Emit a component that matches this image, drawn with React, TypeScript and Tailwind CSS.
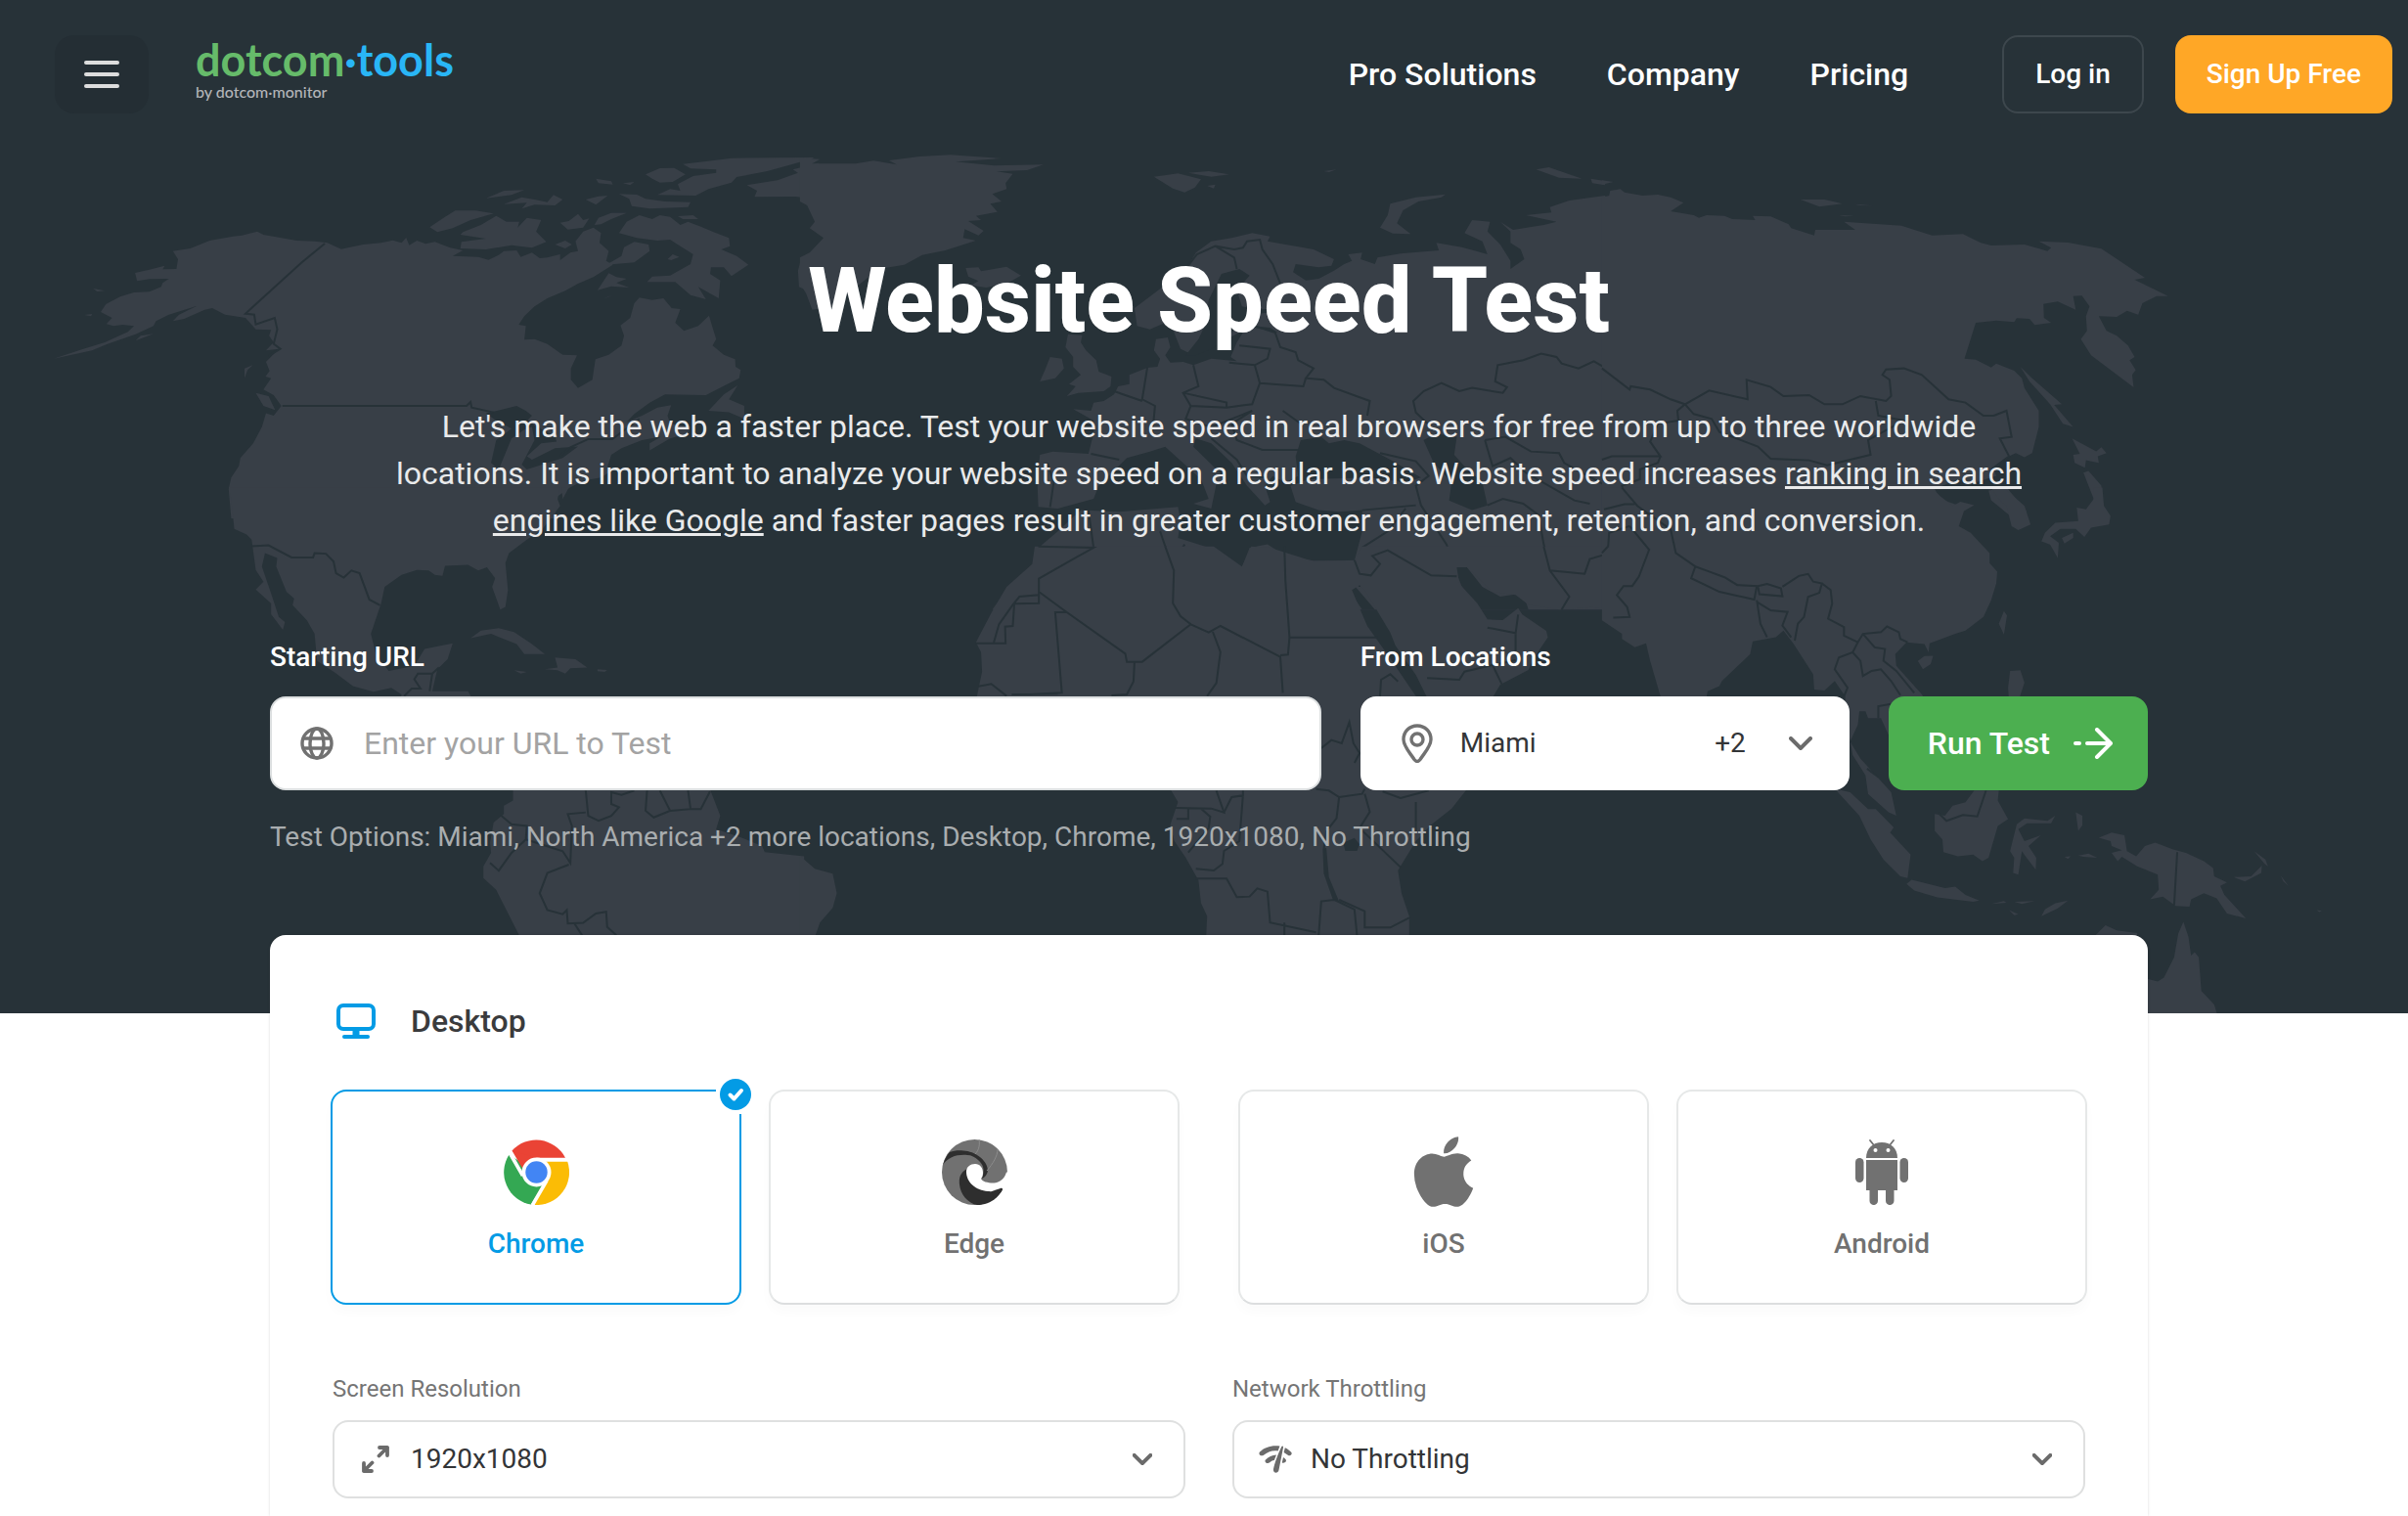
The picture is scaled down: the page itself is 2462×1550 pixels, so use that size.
import React, { useState } from "react";
import { FaApple } from "react-icons/fa";

type Tile = { transform: string; land: string[]; water?: string[]; borders: string[] };

/* The map is stored in sheets, each in its own coordinate grid. */
const tiles: Tile[] = [
  {
    transform: "scale(0.523 0.3333)",
    land: [
      "M105,1100 L160,1072 L205,1050 L250,1018 L262,1000 L240,996 L222,1000 L208,994 L219,975 L197,957 L207,933 L235,910 L262,897 L292,895 L315,880 L318,868 L330,855 L292,856 L268,862 L264,837 L290,828 L322,815 L318,826 L345,825 L348,795 L338,770 L372,762 L410,738 L455,725 L473,722 L503,710 L515,720 L545,728 L580,738 L615,740 L640,745 L667,764 L710,750 L745,745 L768,737 L785,745 L794,729 L800,752 L815,738 L832,748 L850,742 L880,760 L905,768 L885,785 L935,788 L955,797 L975,782 L985,770 L1010,768 L1018,788 L1040,775 L1055,792 L1070,790 L1095,780 L1095,798 L1115,775 L1130,770 L1125,740 L1140,710 L1160,698 L1175,715 L1172,745 L1190,770 L1185,800 L1198,812 L1160,850 L1130,870 L1105,892 L1070,915 L1045,940 L1025,970 L1014,996 L1028,1000 L1025,1042 L1045,1040 L1070,1055 L1100,1088 L1128,1090 L1116,1130 L1116,1165 L1130,1190 L1158,1165 L1164,1102 L1190,1088 L1215,1060 L1220,1030 L1213,998 L1232,975 L1240,930 L1250,913 L1275,920 L1297,915 L1313,945 L1330,948 L1320,990 L1337,1015 L1365,1000 L1386,968 L1400,1040 L1393,1060 L1415,1088 L1437,1102 L1438,1125 L1448,1135 L1445,1160 L1420,1180 L1380,1212 L1300,1210 L1270,1235 L1240,1270 L1225,1295 L1255,1275 L1285,1250 L1312,1243 L1305,1275 L1310,1300 L1350,1310 L1345,1330 L1310,1345 L1270,1382 L1270,1360 L1292,1340 L1255,1350 L1215,1375 L1195,1395 L1188,1430 L1190,1450 L1175,1465 L1140,1475 L1115,1495 L1088,1525 L1085,1590 L452,1590 L447,1500 L452,1465 L467,1430 L470,1405 L495,1360 L512,1310 L520,1268 L535,1275 L550,1245 L535,1212 L515,1195 L530,1160 L519,1155 L527,1138 L520,1110 L545,1070 L520,1075 L535,1050 L526,1030 L530,1012 L500,1010 L480,975 L440,965 L415,945 L400,950 L360,978 L338,985 L350,965 L385,938 L330,965 L305,985 L300,1000 L265,1025 L210,1055 L180,1075 Z",
      "M840,697 L870,665 L890,646 L930,646 L965,655 L920,675 L885,700 L855,712 Z",
      "M905,712 L940,690 L970,662 L990,680 L1015,680 L1012,698 L1030,668 L1058,675 L1048,710 L1068,742 L1040,760 L1000,752 L950,765 L900,762 L902,742 L950,732 L900,720 Z",
      "M1095,683 L1112,678 L1130,656 L1140,675 L1152,670 L1140,698 L1110,704 Z",
      "M1085,750 L1105,738 L1118,750 L1105,762 Z",
      "M1162,690 L1170,668 L1195,653 L1225,653 L1195,672 L1175,688 Z",
      "M1210,715 L1225,680 L1250,660 L1275,672 L1290,660 L1310,665 L1330,690 L1345,680 L1370,695 L1395,712 L1425,730 L1427,755 L1410,765 L1440,785 L1463,812 L1430,847 L1415,820 L1390,820 L1388,840 L1408,860 L1405,915 L1365,880 L1380,918 L1350,905 L1320,865 L1265,865 L1275,848 L1310,845 L1350,810 L1355,780 L1330,755 L1310,735 L1285,738 L1245,730 Z",
      "M1185,812 L1215,785 L1220,758 L1240,742 L1268,750 L1270,770 L1240,805 Z",
      "M1168,890 L1190,838 L1205,850 L1225,855 L1205,868 L1230,882 L1195,878 Z",
      "M950,608 L985,585 L1025,583 L1000,598 Z",
      "M985,626 L1020,605 L1045,612 L1070,620 L1082,598 L1100,612 L1085,630 L1045,628 L1020,640 L1030,622 Z",
      "M1145,612 L1170,602 L1188,600 L1165,628 Z",
      "M1165,548 L1195,556 L1198,566 L1170,562 Z",
      "M1218,562 L1240,558 L1232,568 Z",
      "M1210,595 L1245,597 L1262,610 L1300,618 L1350,620 L1345,635 L1270,640 L1235,632 L1230,610 Z",
      "M1262,535 L1290,516 L1318,515 L1340,535 L1315,558 L1290,560 L1275,548 Z",
      "M1335,503 L1380,495 L1430,485 L1590,483 L1590,486 L1500,525 L1440,543 L1430,560 L1385,580 L1360,600 L1285,598 L1310,580 L1330,585 L1325,565 L1355,540 L1400,530 L1400,520 L1350,517 Z",
      "M1460,568 L1520,553 L1560,530 L1550,520 L1600,500 L1600,612 L1555,603 L1475,604 L1480,585 Z",
      "M1590,785 L1565,800 L1560,830 L1562,880 L1590,900 Z",
      "M1325,663 L1355,660 L1365,672 L1335,672 Z",
      "M1305,795 L1315,780 L1328,788 L1312,798 Z",
      "M1385,1260 L1415,1210 L1442,1182 L1425,1225 L1455,1245 L1455,1285 L1425,1265 Z",
      "M478,1160 L478,1130 L494,1120 L484,1135 Z",
      "M500,1205 L525,1215 L538,1258 L515,1245 Z",
      "M265,1045 L275,1030 L300,1024 Z",
      "M182,885 L205,892 L190,894 Z",
      "M165,966 L180,963 L178,970 Z",
      "M1180,915 L1198,905 L1188,912 Z",
    ],
    water: [
      "M950,1268 L1010,1245 L1028,1260 L1040,1275 L1032,1288 L1045,1305 L1085,1338 L1088,1355 L1058,1360 L1030,1400 L1040,1410 L1085,1375 L1130,1370 L1100,1405 L1030,1440 L1020,1425 L1045,1350 L1040,1310 L1025,1318 L1000,1345 L975,1440 L960,1420 L970,1350 L1000,1315 L970,1290 Z",
    ],
    borders: [
      "M635,747 L590,805 L480,962 L497,965 L500,995 L537,975 L542,1010 L535,1055 L548,1070 L525,1092",
      "M552,1245 L912,1245 L920,1233 L922,1250 L965,1265",
      "M1095,1398 L1115,1372 L1150,1347 L1197,1347 L1250,1285",
    ],
  },
  {
    transform: "translate(820 100) scale(0.523 0.3333)",
    land: [
      "M-4,185 L35,188 L20,202 L105,202 L140,193 L185,205 L170,192 L230,180 L290,175 L390,186 L300,196 L375,208 L472,205 L440,222 L380,226 L412,233 L398,262 L400,280 L372,295 L390,318 L368,325 L382,350 L340,362 L350,375 L325,378 L355,408 L345,422 L318,403 L315,430 L340,438 L280,468 L235,482 L200,512 L150,525 L90,600 L60,640 L20,650 L8,600 L-4,570 L-4,490 L15,475 L42,430 L15,400 L25,380 L10,330 L-4,318 Z",
      "M320,522 L345,520 L350,532 L400,518 L428,545 L400,570 L360,582 L330,575 L345,562 L325,548 Z",
      "M688,242 L735,232 L780,250 L768,275 L748,290 L725,278 Z",
      "M755,230 L795,225 L835,235 L800,242 Z",
      "M792,270 L808,266 L805,278 Z",
      "M1020,225 L1045,220 L1030,228 Z",
      "M1130,398 L1145,360 L1150,325 L1200,305 L1258,296 L1250,305 L1205,318 L1175,345 L1163,385 L1190,418 L1155,416 Z",
      "M1435,220 L1460,213 L1525,248 L1480,245 Z",
      "M1542,248 L1570,255 L1570,268 L1545,262 Z",
      "M520,725 L548,728 L545,750 L555,775 L575,805 L580,840 L605,855 L603,885 L590,900 L540,905 L518,915 L535,885 L522,878 L545,850 L530,825 L530,795 L515,765 Z",
      "M465,870 L475,835 L485,795 L508,800 L512,830 L495,860 Z",
      "M530,955 L565,960 L570,935 L590,930 L610,910 L618,885 L640,878 L640,850 L675,828 L695,825 L700,800 L688,775 L692,740 L715,735 L720,765 L710,790 L720,812 L745,810 L765,820 L800,800 L850,808 L838,795 L850,750 L870,700 L930,720 L915,705 L880,700 L830,740 L800,760 L780,740 L760,785 L740,770 L725,710 L710,690 L680,710 L655,700 L650,645 L680,610 L705,580 L725,560 L740,530 L755,515 L770,475 L800,440 L840,430 L880,415 L915,425 L910,440 L1000,465 L1040,495 L1035,515 L1010,520 L965,510 L960,535 L985,560 L1010,555 L1040,530 L1060,510 L1075,500 L1068,480 L1095,475 L1092,495 L1120,510 L1125,490 L1170,478 L1245,468 L1240,445 L1290,458 L1340,480 L1330,440 L1295,415 L1310,375 L1345,380 L1340,410 L1365,450 L1385,500 L1385,525 L1412,495 L1405,465 L1385,445 L1385,410 L1365,380 L1390,405 L1450,390 L1475,380 L1415,360 L1465,352 L1462,335 L1500,315 L1570,300 L1572,310 L1572,1570 L372,1570 L395,1520 L450,1450 L455,1390 L500,1330 L545,1265 L620,1270 L735,1255 L740,1300 L735,1350 L805,1385 L860,1440 L875,1380 L910,1370 L945,1405 L1000,1420 L1080,1420 L1095,1330 L1095,1265 L1050,1270 L1010,1265 L965,1240 L955,1190 L990,1170 L1110,1165 L1180,1180 L1210,1165 L1150,1110 L1090,1060 L1060,1050 L1030,1060 L1015,1040 L975,1050 L965,1100 L970,1160 L945,1180 L920,1160 L905,1190 L915,1240 L905,1250 L870,1190 L840,1120 L800,1060 L770,1045 L765,1070 L830,1170 L810,1185 L800,1260 L765,1245 L795,1230 L780,1170 L710,1070 L680,1085 L635,1105 L580,1190 L570,1230 L500,1260 L462,1255 L460,1180 L465,1095 L490,1085 L560,1092 L570,1030 L570,990 Z",
    ],
    water: [
      "M820,540 L855,525 L875,545 L850,590 L860,640 L890,650 L960,640 L930,655 L880,665 L885,690 L850,700 L830,740 L800,770 L770,790 L750,790 L775,740 L790,690 L795,620 Z",
      "M1215,1050 L1240,1030 L1280,1040 L1275,1095 L1295,1130 L1330,1180 L1340,1250 L1310,1265 L1265,1235 L1270,1180 L1235,1120 Z",
      "M1048,1445 L1060,1460 L1120,1570 L1095,1570 L1065,1500 Z",
      "M1275,1440 L1300,1440 L1330,1500 L1365,1530 L1410,1520 L1420,1570 L1320,1570 L1290,1500 Z",
    ],
    borders: [
      "M755,515 L772,480 L808,455 L845,465 L862,460 L870,440 L895,435 L900,465 L920,510 L935,570",
      "M808,455 L845,490 L850,525",
      "M885,700 L925,720 L935,765 L965,780 L970,805 L1000,830 L985,860 L1020,865 L1040,890 L1110,930 L1105,975",
      "M855,760 L915,770 L910,800 L885,820 L835,812",
      "M765,820 L775,885 L745,905 L760,945 L830,950 L880,940 L895,875 L885,820",
      "M895,875 L980,885 L985,860",
      "M675,828 L665,925 L690,945 L685,1030 M610,900 L665,930",
      "M745,905 L830,935 L830,950 M760,945 L750,985 L800,1010 L880,960",
      "M880,960 L840,1000 L850,1050 L900,1080 L970,1080 M940,960 L975,1000",
      "M800,1045 L850,1110 L870,1160 L910,1165",
      "M480,1120 L492,1180 L485,1255 M565,1092 L620,1110",
      "M1130,1090 L1200,1115 L1225,1160 L1200,1190 L1210,1250 L1260,1370 L1275,1440",
      "M1095,1265 L1200,1250 M1095,1380 L1145,1330 L1180,1260",
      "M1572,830 L1548,808 L1518,830 L1485,815 L1475,795 L1445,785 L1410,805 L1360,820 L1355,870 L1378,888 L1370,905 L1310,890 L1285,900 L1250,875 L1215,900 L1195,930 L1200,965 L1230,1010",
      "M1335,1050 L1375,1040 L1425,1085 L1480,1090 L1490,1120 L1572,1190 M1335,1050 L1350,1130 L1385,1105 L1415,1150 L1510,1235 L1540,1245",
      "M1340,1250 L1370,1230 L1410,1245 L1440,1280 L1450,1370 L1465,1455 L1530,1455 L1540,1410 L1572,1400",
      "M560,1265 L570,1380 L530,1400 L520,1440 L465,1475 L463,1570 M465,1515 L505,1560",
      "M700,1330 L722,1430 L725,1570 M725,1430 L748,1370",
      "M943,1405 L948,1570 M1085,1420 L1090,1500",
      "M1090,1465 L1120,1450 L1115,1410 L1145,1385 L1190,1430 L1235,1467 L1275,1470",
    ],
  },
  {
    transform: "translate(1640 0) scale(0.5242 0.3333)",
    land: [
      "M-4,605 L10,600 L12,585 L32,580 L40,590 L75,600 L105,597 L130,605 L155,622 L130,648 L175,660 L185,668 L200,660 L235,662 L250,672 L295,675 L290,662 L325,664 L360,688 L365,700 L410,722 L412,705 L490,705 L468,680 L580,692 L640,722 L700,718 L735,745 L755,753 L820,750 L865,770 L872,760 L848,740 L905,744 L970,763 L1055,852 L1035,858 L1100,908 L1078,908 L1050,930 L1042,965 L1020,953 L1000,972 L965,970 L980,1015 L1000,1030 L1022,1060 L1035,1095 L1025,1105 L1037,1135 L1030,1150 L1033,1188 L950,1090 L930,1040 L942,1015 L940,970 L947,940 L932,907 L915,908 L920,950 L885,925 L857,932 L858,975 L872,990 L840,997 L830,978 L805,976 L800,988 L765,983 L725,990 L703,1100 L725,1103 L755,1127 L765,1115 L800,1137 L815,1160 L820,1190 L848,1260 L848,1310 L835,1390 L820,1403 L803,1390 L790,1400 L760,1440 L765,1460 L725,1480 L690,1470 L645,1500 L655,1530 L690,1550 L690,1580 L-4,1580 Z",
      "M-4,553 L18,558 L-4,566 Z",
      "M383,612 L430,612 L465,625 L420,634 Z",
      "M488,626 L525,631 L500,630 Z",
      "M458,660 L488,662 L470,664 Z",
      "M812,1125 L835,1160 L893,1240 L878,1242 L915,1310 L895,1300 L870,1240 L830,1170 Z",
      "M913,1345 L960,1385 L970,1372 L980,1390 L963,1400 L965,1420 L940,1412 L938,1435 L918,1420 L915,1395 L928,1392 Z",
      "M935,1450 L945,1445 L970,1490 L973,1580 L945,1580 L955,1530 Z",
      "M750,1505 L785,1495 L825,1570 L790,1580 L755,1535 Z",
    ],
    borders: [
      "M-4,1130 L50,1195 L52,1185 L90,1195 L130,1225 L158,1240 L205,1198 L280,1225 L278,1165 L325,1187 L350,1215 L400,1212 L430,1240 L465,1240 L500,1215 L550,1230 L560,1215 L557,1165 L543,1150 L550,1133 L585,1130 L620,1150 L672,1225 L705,1235 L740,1275 L760,1275 L785,1260 L795,1340 L772,1345 L790,1400 L755,1440",
      "M158,1240 L175,1270 L210,1285 L225,1325 L300,1370 L325,1407 L400,1412 L435,1427 L480,1410 L520,1395 L515,1350 L585,1290 L535,1275 L530,1230",
      "M158,1240 L143,1260 L145,1290 L105,1300 L90,1355 L110,1400 L15,1400 L-4,1410 M110,1400 L105,1420 L70,1440 L70,1470 L35,1490 L40,1545",
    ],
  },
  {
    transform: "translate(0 500) scale(0.523 0.3444)",
    land: [
      "M447,-4 L1095,-4 L1090,30 L1095,50 L1060,120 L1030,150 L995,190 L988,220 L993,300 L988,350 L978,358 L962,290 L968,265 L952,232 L935,242 L915,225 L870,228 L865,258 L850,255 L838,242 L815,240 L785,255 L752,290 L745,340 L725,430 L735,490 L760,540 L810,525 L830,475 L885,458 L875,505 L855,535 L845,600 L915,600 L930,640 L780,640 L785,610 L765,590 L730,602 L690,585 L655,545 L620,510 L615,430 L600,390 L572,345 L575,325 L560,305 L540,230 L542,205 L518,190 L512,230 L530,310 L545,380 L557,395 L553,418 L530,372 L530,340 L500,298 L515,275 L500,240 L492,150 L482,135 L458,118 L452,30 Z",
      "M1098,-4 L1112,-4 L1100,30 Z",
      "M920,443 L940,420 L975,413 L1005,425 L1040,460 L1065,490 L1025,490 L1010,460 L960,430 Z",
      "M1065,535 L1090,530 L1085,500 L1125,505 L1148,530 L1115,532 L1105,548 L1090,538 Z",
      "M1005,538 L1030,543 L1018,548 Z",
      "M1168,535 L1187,537 L1182,543 L1168,541 Z",
      "M1003,880 L1385,880 L1408,970 L1400,1010 L1450,1035 L1490,1060 L1495,1078 L1572,1090 L1572,1340 L1020,1340 L990,1250 L970,1190 L945,1155 L945,1120 L960,1080 L958,1050 L965,990 L985,965 L985,940 L1003,925 Z",
    ],
    borders: [
      "M492,170 L525,167 L570,203 L612,203 L615,190 L637,192 L652,215 L657,250 L672,263 L687,242 L703,250 L722,328 L743,345",
      "M790,615 L805,592 L822,592 L810,565 L817,548 L845,548 L858,530 M845,548 L840,600",
      "M1145,895 L1150,970 L1170,985 L1195,970 L1210,945 L1195,935 L1195,900 L1215,908 L1240,895",
      "M1265,895 L1262,955 L1278,975 L1310,955 L1290,895 M1345,895 L1350,950 L1310,955 M1350,950 L1370,950 L1388,898",
      "M980,970 L1000,995 L1030,1000 L1028,1040 L1100,1075 L1115,1110 L1118,1000 L1110,965 L1145,960",
      "M958,1110 L975,1133 L1000,1080 L1028,1040",
      "M1112,1115 L1070,1140 L1055,1200 L1070,1250 L1100,1262 L1108,1250 L1110,1290 L1140,1288 L1165,1260 L1185,1255 L1187,1300 L1205,1325 M1123,1290 L1138,1325",
    ],
  },
  {
    transform: "translate(820 560) scale(0.523 0.3333)",
    land: [
      "M455,-4 L805,-4 L860,58 L878,-4 L915,0 L1000,42 L1080,38 L1095,-4 L1572,-4 L1572,190 L1545,182 L1480,190 L1420,175 L1395,145 L1350,135 L1300,60 L1280,60 L1285,110 L1320,170 L1340,220 L1370,222 L1400,185 L1408,205 L1455,255 L1458,275 L1430,340 L1420,375 L1365,420 L1350,460 L1222,460 L1200,390 L1160,300 L1150,260 L1100,130 L1090,115 L1075,130 L1105,240 L1150,340 L1200,455 L1215,470 L1300,740 L1270,800 L1230,850 L1200,900 L1165,990 L1172,1060 L1187,1130 L1187,1195 L790,1195 L792,1130 L780,1090 L775,1020 L750,950 L728,900 L720,850 L735,780 L720,740 L600,470 L340,470 L352,380 L350,320 L340,290 L370,200 L400,120 L450,50 Z",
      "M-4,945 L25,985 L60,1000 L68,1060 L60,1105 L35,1150 L25,1195 L-4,1195 Z",
    ],
    water: ["M1062,930 L1058,905 L1080,890 L1090,910 L1085,930 Z", "M1018,925 L1025,920 L1030,1010 L1050,1085 L1038,1080 L1020,1000 Z"],
    borders: [
      "M462,-4 L570,0 L530,35 L463,95 L463,170 L415,172 M463,135 L515,195 L632,325 L635,350 L665,350 L760,235 L740,210 L725,170 L727,70 L710,-4",
      "M415,172 L412,240 L397,242 L398,293 L340,293 M463,145 L425,150 L412,175 L385,235 L375,290",
      "M515,198 L495,198 L508,445 L445,450 M345,425 L370,418 L400,455 M410,450 L500,448",
      "M650,350 L648,410 L635,450 L605,453",
      "M760,235 L795,260 L818,240 L935,335 L940,445 M803,258 L818,320 L810,415 L792,455",
      "M943,-4 L945,100 L953,275 L1125,275 M953,275 L950,328 L935,330",
      "M1080,38 L1090,80 L1112,85 L1130,50 L1115,25 L1145,8 L1230,85 L1280,88",
      "M1130,455 L1132,405 L1150,388 L1165,410 M1222,400 L1285,405 L1295,380 L1350,360 L1368,418 M1350,360 L1395,345 M1340,245 L1395,262 L1400,205 M1395,262 L1395,330",
      "M1450,-4 L1462,70 L1500,150 L1485,190 M1462,70 L1530,80 L1540,35 L1572,20",
      "M1015,615 L1035,590 L1055,600 L1070,535 L1078,600 L1090,630 L1080,660 M1005,740 L1030,745 L1050,765 L1095,755 L1100,740",
      "M730,798 L800,800 L825,812 L810,745 M825,812 L840,765 L862,760 L862,745 M862,760 L855,900 L825,930 L822,970 L805,990 L770,985",
      "M755,800 L755,832 L732,832 M780,800 L798,825 L795,860 L755,935",
      "M770,1015 L830,1015 L850,1072 L875,1070 L890,1045 L910,1055 L915,1150 L1005,1180",
      "M1050,765 L1045,830 L1025,870 L1020,925 M1100,755 L1110,810 L1090,860 L1170,980 M1135,748 L1170,768 L1225,745 M1200,780 L1200,870",
      "M1040,1080 L1015,1085 L1010,1190 M1040,1080 L1080,1110 L1085,1190 M1050,1080 L1100,1115 L1100,1165 L1150,1165 L1187,1135 M943,1150 L943,1195",
    ],
  },
  {
    transform: "translate(1640 500) scale(0.5242 0.3444)",
    land: [
      "M-4,-4 L640,-4 L655,20 L680,50 L695,38 L722,48 L702,65 L692,110 L715,130 L752,190 L752,220 L767,245 L765,280 L755,330 L740,380 L705,420 L685,430 L635,458 L633,485 L625,460 L590,455 L568,490 L570,525 L620,610 L640,660 L650,700 L620,740 L600,760 L570,700 L555,730 L540,680 L515,680 L510,660 L498,660 L495,700 L480,750 L500,800 L530,850 L560,900 L570,970 L555,960 L515,905 L510,850 L485,790 L478,730 L470,615 L450,570 L430,598 L410,595 L408,550 L370,460 L350,420 L335,440 L290,452 L285,490 L230,570 L225,585 L202,600 L195,660 L170,700 L130,680 L110,615 L90,510 L82,458 L60,470 L35,445 L35,430 L-4,390 Z",
      "M755,-4 L780,-4 L820,50 L832,105 L808,122 L795,110 L785,50 L770,30 Z",
      "M955,-4 L972,-4 L975,50 L988,80 L985,105 L950,115 L937,142 L920,118 L890,118 L870,140 L887,160 L885,205 L870,165 L853,155 L860,130 L880,100 L925,95 L922,55 L940,60 L955,30 Z",
      "M893,145 L915,130 L915,145 L898,162 Z",
      "M770,400 L780,362 L786,375 L780,432 Z",
      "M612,510 L625,496 L642,495 L637,520 L622,535 Z",
      "M792,540 L812,538 L820,575 L808,630 L790,630 L788,590 Z",
      "M450,890 L480,900 L515,950 L530,950 L565,1005 L558,1020 L598,1085 L592,1155 L578,1150 L545,1100 L520,1040 L498,970 Z",
      "M590,1172 L600,1160 L640,1175 L665,1185 L685,1180 L705,1205 L732,1222 L720,1225 L650,1212 L605,1192 Z",
      "M645,965 L665,970 L680,940 L705,930 L722,895 L770,895 L768,925 L788,980 L768,1000 L750,1095 L738,1105 L720,1085 L690,1090 L662,1078 L660,1040 L645,1015 Z",
      "M880,970 L872,992 L825,992 L808,1010 L820,1045 L852,1028 L828,1060 L843,1095 L842,1130 L822,1090 L815,1075 L808,1145 L798,1140 L800,1095 L792,1075 L805,995 L820,978 L865,985 Z",
      "M920,960 L933,970 L933,998 L925,1015 Z",
      "M925,1088 L945,1082 L962,1095 L935,1092 Z",
      "M898,1092 L910,1090 L905,1098 Z",
      "M965,1035 L990,1020 L1015,1028 L1020,1075 L1038,1090 L1055,1060 L1075,1050 L1110,1070 L1135,1080 L1170,1105 L1188,1125 L1190,1150 L1215,1168 L1202,1178 L1210,1205 L1252,1275 L1215,1260 L1195,1215 L1170,1200 L1145,1218 L1142,1240 L1115,1238 L1090,1210 L1065,1218 L1082,1190 L1080,1145 L1040,1120 L1010,1092 L1002,1105 L990,1080 L1010,1072 L990,1060 L988,1045 Z",
      "M1228,1152 L1262,1150 L1283,1118 L1282,1140 L1250,1165 Z",
      "M1268,1075 L1290,1100 L1295,1120 L1288,1112 Z",
      "M1320,1148 L1335,1178 L1325,1165 Z",
      "M1390,1250 L1400,1252 L1395,1256 Z",
      "M755,1232 L780,1223 L785,1228 Z",
      "M800,1225 L840,1223 L815,1232 Z",
      "M790,1250 L808,1262 L800,1265 Z",
      "M853,1268 L860,1248 L880,1230 L905,1222 L885,1245 Z",
      "M978,1295 L1000,1310 L1040,1318 L1040,1330 L955,1330 Z",
      "M1050,1450 L1080,1462 L1092,1450 L1112,1390 L1120,1320 L1130,1285 L1140,1330 L1145,1385 L1152,1375 L1160,1390 L1165,1490 L1190,1530 L1198,1570 L1050,1570 Z",
    ],
    borders: [
      "M50,110 L88,180 L68,260 L55,288 L38,288 L25,315 L45,350 L50,380 L18,382 M35,-4 L65,50 L130,120 L140,190 L178,230 L170,265 L225,305 L293,328 L298,288 L260,285 L235,262 L205,245 L178,230",
      "M0,60 L40,45 L60,45 M-4,190 L8,170 L10,130 L50,110",
      "M300,288 L303,312 L348,318 L345,295 L318,282 Z M348,290 L380,258 L398,252 L408,275 L425,280 L420,308 L398,320 L390,380 L378,400 L372,450",
      "M298,330 L305,400 L318,440 M298,335 L325,360 L358,365 L348,405 L365,440",
      "M425,280 L442,300 L445,340 L437,385 L468,410 L468,435 L495,455 L485,485 L458,500 L450,535 L475,590 L468,615",
      "M495,455 L505,430 L540,425 L552,408 L575,425 L578,445 L592,455 M505,430 L528,470 L548,475 L545,510 L570,540 L605,605",
      "M485,485 L500,510 L505,555 L522,540 L540,535 L560,570 L578,612 M535,680 L535,645 L560,638",
      "M513,830 L535,855 M652,962 L668,985 L700,968 L728,972 L745,895 M1118,1078 L1112,1235",
    ],
  },
];

function WorldMap() {
  return (
    <svg
      className="pointer-events-none absolute inset-0 h-full w-full"
      viewBox="0 0 2462 1036"
      preserveAspectRatio="xMidYMin slice"
      aria-hidden="true"
    >
      {tiles.map((t) => (
        <g key={t.transform} transform={t.transform}>
          <path d={t.land.join(" ")} fill="#383f47" />
          {t.water && <path d={t.water.join(" ")} fill="#273238" />}
          <path d={t.borders.join(" ")} fill="none" stroke="#273238" strokeWidth="2" vectorEffect="non-scaling-stroke" />
        </g>
      ))}
    </svg>
  );
}

function GlobeIcon() {
  return (
    <svg className="h-[34px] w-[34px] shrink-0" viewBox="0 0 34 34" fill="none" stroke="#717171" strokeWidth="3.400" aria-hidden="true">
      <circle cx="17" cy="17" r="15" />
      <ellipse cx="17" cy="17" rx="7" ry="15" />
      <path d="M3 12h28M3 22h28" />
    </svg>
  );
}

function PinIcon() {
  return (
    <svg className="h-10 w-8 shrink-0" viewBox="0 0 32 40" fill="none" stroke="#717171" strokeWidth="3.400" strokeLinejoin="round" aria-hidden="true">
      <path d="M16 2C8 2 2 8 2 16c0 7 6 13 11 20.500q3 4 6 0C24 29 30 23 30 16 30 8 24 2 16 2Z" />
      <circle cx="16" cy="16" r="6" />
    </svg>
  );
}

function Chevron({ small = false }: { small?: boolean }) {
  return (
    <svg
      className={small ? "h-3 w-5 shrink-0" : "h-3.5 w-6 shrink-0"}
      viewBox="0 0 24 14"
      fill="none"
      stroke="#6b6b6b"
      strokeWidth={small ? 4.8 : 4}
      strokeLinecap="round"
      strokeLinejoin="round"
      aria-hidden="true"
    >
      <path d="M2 2l10 10L22 2" />
    </svg>
  );
}

function RunArrow() {
  return (
    <svg className="h-8 w-10 shrink-0" viewBox="0 0 40 32" fill="none" stroke="#fff" strokeWidth="4" strokeLinecap="round" strokeLinejoin="round" aria-hidden="true">
      <path d="M2 16h4M14 16h23M24 2l14 14-14 14" />
    </svg>
  );
}

function DesktopIcon() {
  return (
    <svg className="h-9 w-10 shrink-0" viewBox="0 0 40 36" fill="none" stroke="#039be5" strokeWidth="4" strokeLinecap="round" aria-hidden="true">
      <rect x="2" y="2" width="36" height="24" rx="5" />
      <path d="M8 34h24" />
      <path d="M20 27v6" strokeWidth="7" strokeLinecap="butt" />
    </svg>
  );
}

function ChromeLogo() {
  return (
    <svg className="h-[67px] w-[67px]" viewBox="0 0 67 67" aria-hidden="true">
      <path d="M33.500 33.500 L8.500 11.500 A33.500 33.500 0 0 1 63 18.700 L33.500 18.700 Z" fill="#ea4335" />
      <path d="M33.500 33.500 L43 22.600 L65.200 22.600 A33.500 33.500 0 0 1 31.500 67 Z" fill="#fbbc05" />
      <path d="M33.500 33.500 L5.500 15.500 A33.500 33.500 0 0 0 28 66.600 L40 46 Z" fill="#34a853" />
      <path d="M8.500 11.500 L20 31 L24 28 L33.500 18.700 Z" fill="#ea4335" />
      <path d="M6 13.500 L19.500 37 M33.500 20.700 L66 20.700 M44 42 L29.500 67" stroke="#fff" strokeWidth="3.600" fill="none" />
      <circle cx="33.500" cy="33.500" r="15" fill="#fff" />
      <circle cx="33.500" cy="33.500" r="11.200" fill="#4285f4" />
    </svg>
  );
}

function EdgeLogo() {
  return (
    <svg className="h-[67px] w-[67px]" viewBox="0 0 67 67" aria-hidden="true">
      <circle cx="33.500" cy="33.500" r="33.500" fill="#717171" />
      <path d="M1 26C3 20 5 16 8 13c5-2 10-2 14-1.500C34 12 46 21 47 31c0 4-3 8-6 9 3-8 2-14-4-19-3-3-7-5-11-5C16 15 6 18 1 26Z" fill="#2e2e2e" />
      <path d="M38 0c1 5 0 11-4 15M57 10c0 7-5 15-11 22" fill="none" stroke="#8c8c8c" />
      <path d="M26 30c-6 3-9 8-8 16 1 10 8 19 18 21 12 0 22-7 26-16l-14-2-10-6Z" fill="#2e2e2e" />
      <path d="M25 33c0-5 4-8 9-8s8 4 8 9c0 3-1 5-2 6 1 3 7 4.500 12 4.500 7 0 12-4 14-11h4v34H54c4-3 8-10 8-16 0-1-1-1.500-2-1-4 2-8 3-13 2.500C35 52 25 44 25 33Z" fill="#fff" />
      <path d="M53 61c4-3 8-7 9-10 0-1-1-1.500-2-1l-9 3Z" fill="#2e2e2e" />
    </svg>
  );
}

function AppleLogo() {
  return <FaApple className="h-[82px] w-[82px] text-[#717171]" aria-hidden="true" />;
}

function AndroidLogo() {
  return (
    <svg className="h-[67px] w-[54px]" viewBox="0 0 54 67" fill="#717171" aria-hidden="true">
      <path d="M11 19C11 9 18 3 27 3s16 6 16 16Z" />
      <path d="M15 1l4 5M39 1l-4 5" stroke="#717171" strokeWidth="1.800" strokeLinecap="round" />
      <rect x="11" y="21" width="32" height="31" />
      <rect x="0" y="19" width="8.500" height="25" rx="4.200" />
      <rect x="45.500" y="19" width="8.500" height="25" rx="4.200" />
      <path d="M14.500 50h8.500v12.800a4.200 4.200 0 0 1-8.500 0ZM31 50h8.500v12.800a4.200 4.200 0 0 1-8.500 0Z" />
      <circle cx="20.500" cy="11" r="2" fill="#fff" />
      <circle cx="33.500" cy="11" r="2" fill="#fff" />
    </svg>
  );
}

function ExpandIcon() {
  return (
    <svg className="h-7 w-7" viewBox="0 0 28 28" fill="none" stroke="#6b6b6b" strokeWidth="3.800" strokeLinecap="round" strokeLinejoin="round" aria-hidden="true">
      <path d="M18 2h8v8M26 2l-8.500 8.500M10 26H2v-8M2 26l8.500-8.500" />
    </svg>
  );
}

function SpeedIcon() {
  return (
    <svg className="h-7 w-[34px]" viewBox="0 0 34 28" fill="#6b6b6b" aria-hidden="true">
      <path d="M1 6.500C6 1.500 14-.8 21.500.6L19.600 5.400C14 4.500 9 6.300 5 9.800 2 11.500-.8 8.500 1 6.500Z" />
      <path d="M26.800 2.200c2.500 1 4.600 2.600 6.400 4.600 1.600 2-1 4.600-3.400 2.900L25.600 7Z" />
      <path d="M7 14.500c3-3 6.500-4.700 11-5L15.800 15c-2 .3-3.300 1.200-4.600 2.300-3 2-6-.8-4.200-2.800Z" />
      <path d="M25 12c1 .6 2 1.400 2.600 2.300 1.200 1.800-.8 4.100-3.800 3.200Z" />
      <path d="M24.200.5c.8 0 1 .6.800 1.500L20.500 25c-.8 4-6.200 3.500-5.500-1C16 18 20 8 23.200 1.200c.2-.4.600-.7 1-.7Z" />
    </svg>
  );
}

const platforms = [
  { id: "chrome", name: "Chrome", Logo: ChromeLogo },
  { id: "edge", name: "Edge", Logo: EdgeLogo },
  { id: "ios", name: "iOS", Logo: AppleLogo },
  { id: "android", name: "Android", Logo: AndroidLogo },
];

function PlatformCard({ item, checked, onSelect }: { item: (typeof platforms)[number]; checked: boolean; onSelect: () => void }) {
  const { id, name, Logo } = item;
  return (
    <label
      className={
        "relative flex h-[220px] flex-1 cursor-pointer flex-col items-center rounded-2xl border-2 bg-white pt-[42px] shadow-[0_8px_12px_rgba(0,0,0,0.02)] " +
        (checked ? "border-[#039be5] text-[#039be5]" : "border-[#e6e8e8] border-b-[#dcdedf] text-[#717171]")
      }
    >
      <input className="sr-only" type="radio" name="platform" value={id} checked={checked} onChange={onSelect} />
      <span className="flex h-20 items-center">
        <Logo />
      </span>
      <span className="mt-[18px] text-[28px] leading-8 font-medium">{name}</span>
      {checked && (
        <span className="absolute -top-[17px] -right-4 bg-white p-1">
          <svg className="h-8 w-8" viewBox="0 0 32 32" aria-hidden="true">
            <circle cx="16" cy="16" r="16" fill="#039be5" />
            <path d="M10.500 16.500l4 4 7.500-8.500" fill="none" stroke="#fff" strokeWidth="4" strokeLinecap="round" strokeLinejoin="round" />
          </svg>
        </span>
      )}
    </label>
  );
}

function OptionSelect({ id, label, icon, options }: { id: string; label: string; icon: React.ReactNode; options: string[] }) {
  return (
    <div className="min-w-0 flex-1">
      <label htmlFor={id} className="block text-2xl leading-8 text-[#757575]">
        {label}
      </label>
      <div className="relative mt-4">
        <span className="pointer-events-none absolute inset-y-0 left-6 flex w-10 items-center justify-center">{icon}</span>
        <select id={id} className="h-20 w-full appearance-none rounded-2xl border-2 border-[#dfe0e0] bg-white pr-20 pl-[78px] text-[28px] text-[#333537]">
          {options.map((o) => (
            <option key={o}>{o}</option>
          ))}
        </select>
        <span className="pointer-events-none absolute inset-y-0 right-[34px] flex items-center">
          <Chevron small />
        </span>
      </div>
    </div>
  );
}

export default function App() {
  const [platform, setPlatform] = useState("chrome");
  const card = (i: number) => (
    <PlatformCard item={platforms[i]} checked={platform === platforms[i].id} onSelect={() => setPlatform(platforms[i].id)} />
  );
  return (
    <div className="bg-white font-[Roboto,sans-serif]">
      <div className="relative bg-[#273238] pb-[164px] text-white">
        <WorldMap />
        <header className="relative flex items-center py-9 pr-4 pl-14">
          <button type="button" aria-label="Menu" className="flex h-20 w-24 flex-col items-center justify-center gap-2 rounded-[20px] bg-[#242e34]">
            <span className="h-1 w-9 rounded-full bg-[#dddddd]" />
            <span className="h-1 w-9 rounded-full bg-[#dddddd]" />
            <span className="h-1 w-9 rounded-full bg-[#dddddd]" />
          </button>
          <a href="#" className="ml-12 flex flex-col pb-2.5 font-[Lato,sans-serif]">
            <span className="text-[45px] leading-[46px] font-bold text-[#66bb6a]">
              dotcom<span className="text-[#29b6f6]">·tools</span>
            </span>
            <span className="text-base leading-5 font-medium text-[#b3b5b8]">by dotcom·monitor</span>
          </a>
          <nav className="ml-auto flex gap-[72px] text-[32px] leading-10 font-medium">
            <a href="#">Pro Solutions</a>
            <a href="#">Company</a>
            <a href="#">Pricing</a>
          </nav>
          <div className="ml-24 flex gap-8 text-[28px] font-medium">
            <button type="button" className="h-20 rounded-2xl border-2 border-[#3d474d] px-8">Log in</button>
            <button type="button" className="h-20 rounded-2xl bg-[#ffa726] px-8">Sign Up Free</button>
          </div>
        </header>

        <main className="relative pl-[10px]">
          <div className="mx-auto max-w-[1920px]">
            <h1 className="pt-[100px] text-center text-[92px] leading-[112px] font-extrabold">Website Speed Test</h1>
            <p className="mx-auto mt-12 max-w-[1700px] text-center text-[32px] leading-[48px] text-[#e9eaeb]">
              Let's make the web a faster place. Test your website speed in real browsers for free from up to three worldwide
              locations. It is important to analyze your website speed on a regular basis. Website speed increases{" "}
              <a href="#" className="underline">ranking in search engines like Google</a> and faster pages result in greater
              customer engagement, retention, and conversion.
            </p>

            <form className="mt-[100px] flex items-end gap-10" onSubmit={(e) => e.preventDefault()}>
              <div className="min-w-0 flex-1">
                <label htmlFor="url" className="block text-[28px] leading-8 font-medium">Starting URL</label>
                <div className="mt-6 flex h-24 items-center rounded-2xl border-2 border-[#dcdfe0] bg-white px-[29px]">
                  <GlobeIcon />
                  <input id="url" type="text" placeholder="Enter your URL to Test" className="ml-[31px] h-full min-w-0 flex-1 text-[32px] text-[#2f3133] outline-none placeholder:text-[#a3a3a3]" />
                </div>
              </div>
              <div className="w-[500px]">
                <label htmlFor="locations" className="block text-[28px] leading-8 font-medium">From Locations</label>
                <button id="locations" type="button" aria-haspopup="listbox" className="mt-6 flex h-24 w-full items-center rounded-2xl bg-white pr-[38px] pl-[42px] text-[28px] text-[#333537]">
                  <PinIcon />
                  <span className="ml-7">Miami</span>
                  <span className="mr-11 ml-auto">+2</span>
                  <Chevron />
                </button>
              </div>
              <button type="submit" className="flex h-24 items-center gap-6 rounded-2xl bg-[#4caf50] pr-9 pl-10 text-[32px] font-medium whitespace-nowrap">
                Run Test
                <RunArrow />
              </button>
            </form>
            <p className="mt-8 text-[28px] leading-8 text-[#a9adaf]">
              Test Options: Miami, North America +2 more locations, Desktop, Chrome, 1920x1080, No Throttling
            </p>
          </div>
        </main>
      </div>

      <section className="relative -mt-20 pl-[10px]">
        <div className="mx-auto max-w-[1920px] rounded-t-2xl bg-white px-[62px] pt-[68px] pb-[18px] shadow-[0_0_3px_rgba(0,0,0,0.15)]">
          <h2 className="flex items-center gap-9 pl-1.5 text-[32px] leading-10 font-medium text-[#3a3b3d]">
            <DesktopIcon />
            Desktop
          </h2>
          <div role="radiogroup" aria-label="Browser" className="mt-[50px] flex gap-[60px]">
            <div className="flex flex-1 gap-7">
              {card(0)}
              {card(1)}
            </div>
            <div className="flex flex-1 gap-7">
              {card(2)}
              {card(3)}
            </div>
          </div>
          <div className="mt-[70px] flex gap-12 px-0.5">
            <OptionSelect id="resolution" label="Screen Resolution" icon={<ExpandIcon />} options={["1920x1080", "1366x768", "1280x1024"]} />
            <OptionSelect id="throttling" label="Network Throttling" icon={<SpeedIcon />} options={["No Throttling", "4G", "3G"]} />
          </div>
        </div>
      </section>
    </div>
  );
}
